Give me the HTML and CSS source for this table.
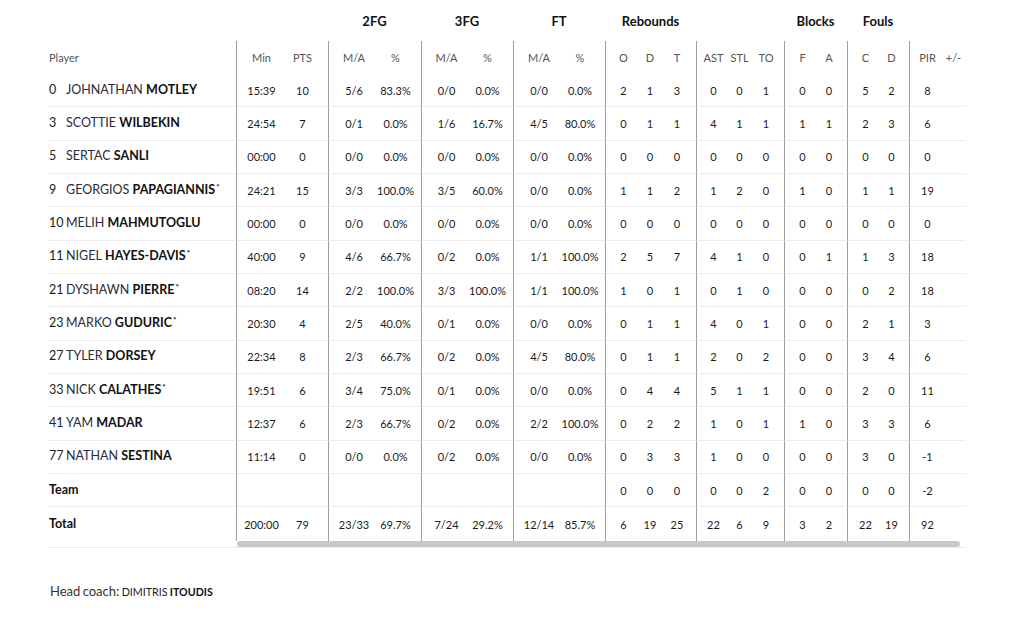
FILE: index.html
```html
<!DOCTYPE html>
<html lang="en">
<head>
<meta charset="utf-8">
<title>Box score</title>
<link rel="stylesheet" href="styles.css">
</head>
<body>
<div class="boxscore">
  <div class="board">
    <div class="players">
      <div class="top"></div>
      <div class="prow head">Player</div>
      <div class="prow"><span class="num">0</span><span class="fn">JOHNATHAN</span>&nbsp;<b>MOTLEY</b></div>
      <div class="prow"><span class="num">3</span><span class="fn">SCOTTIE</span>&nbsp;<b>WILBEKIN</b></div>
      <div class="prow"><span class="num">5</span><span class="fn">SERTAC</span>&nbsp;<b>SANLI</b></div>
      <div class="prow"><span class="num">9</span><span class="fn">GEORGIOS</span>&nbsp;<b>PAPAGIANNIS<sup>*</sup></b></div>
      <div class="prow"><span class="num">10</span><span class="fn">MELIH</span>&nbsp;<b>MAHMUTOGLU</b></div>
      <div class="prow"><span class="num">11</span><span class="fn">NIGEL</span>&nbsp;<b>HAYES-DAVIS<sup>*</sup></b></div>
      <div class="prow"><span class="num">21</span><span class="fn">DYSHAWN</span>&nbsp;<b>PIERRE<sup>*</sup></b></div>
      <div class="prow"><span class="num">23</span><span class="fn">MARKO</span>&nbsp;<b>GUDURIC<sup>*</sup></b></div>
      <div class="prow"><span class="num">27</span><span class="fn">TYLER</span>&nbsp;<b>DORSEY</b></div>
      <div class="prow"><span class="num">33</span><span class="fn">NICK</span>&nbsp;<b>CALATHES<sup>*</sup></b></div>
      <div class="prow"><span class="num">41</span><span class="fn">YAM</span>&nbsp;<b>MADAR</b></div>
      <div class="prow"><span class="num">77</span><span class="fn">NATHAN</span>&nbsp;<b>SESTINA</b></div>
      <div class="prow label">Team</div>
      <div class="prow label total">Total</div>
    </div>
    <div class="stats">
      <div class="groups">
        <span></span><span>2FG</span><span>3FG</span><span>FT</span><span>Rebounds</span><span></span><span>Blocks</span><span>Fouls</span><span></span>
      </div>
      <div class="srow head"><span>Min</span><span>PTS</span><span>M/A</span><span>%</span><span>M/A</span><span>%</span><span>M/A</span><span>%</span><span>O</span><span>D</span><span>T</span><span>AST</span><span>STL</span><span>TO</span><span>F</span><span>A</span><span>C</span><span>D</span><span>PIR</span><span>+/-</span></div>
      <div class="srow"><span>15:39</span><span>10</span><span>5/6</span><span>83.3%</span><span>0/0</span><span>0.0%</span><span>0/0</span><span>0.0%</span><span>2</span><span>1</span><span>3</span><span>0</span><span>0</span><span>1</span><span>0</span><span>0</span><span>5</span><span>2</span><span>8</span><span></span></div>
      <div class="srow"><span>24:54</span><span>7</span><span>0/1</span><span>0.0%</span><span>1/6</span><span>16.7%</span><span>4/5</span><span>80.0%</span><span>0</span><span>1</span><span>1</span><span>4</span><span>1</span><span>1</span><span>1</span><span>1</span><span>2</span><span>3</span><span>6</span><span></span></div>
      <div class="srow"><span>00:00</span><span>0</span><span>0/0</span><span>0.0%</span><span>0/0</span><span>0.0%</span><span>0/0</span><span>0.0%</span><span>0</span><span>0</span><span>0</span><span>0</span><span>0</span><span>0</span><span>0</span><span>0</span><span>0</span><span>0</span><span>0</span><span></span></div>
      <div class="srow"><span>24:21</span><span>15</span><span>3/3</span><span>100.0%</span><span>3/5</span><span>60.0%</span><span>0/0</span><span>0.0%</span><span>1</span><span>1</span><span>2</span><span>1</span><span>2</span><span>0</span><span>1</span><span>0</span><span>1</span><span>1</span><span>19</span><span></span></div>
      <div class="srow"><span>00:00</span><span>0</span><span>0/0</span><span>0.0%</span><span>0/0</span><span>0.0%</span><span>0/0</span><span>0.0%</span><span>0</span><span>0</span><span>0</span><span>0</span><span>0</span><span>0</span><span>0</span><span>0</span><span>0</span><span>0</span><span>0</span><span></span></div>
      <div class="srow"><span>40:00</span><span>9</span><span>4/6</span><span>66.7%</span><span>0/2</span><span>0.0%</span><span>1/1</span><span>100.0%</span><span>2</span><span>5</span><span>7</span><span>4</span><span>1</span><span>0</span><span>0</span><span>1</span><span>1</span><span>3</span><span>18</span><span></span></div>
      <div class="srow"><span>08:20</span><span>14</span><span>2/2</span><span>100.0%</span><span>3/3</span><span>100.0%</span><span>1/1</span><span>100.0%</span><span>1</span><span>0</span><span>1</span><span>0</span><span>1</span><span>0</span><span>0</span><span>0</span><span>0</span><span>2</span><span>18</span><span></span></div>
      <div class="srow"><span>20:30</span><span>4</span><span>2/5</span><span>40.0%</span><span>0/1</span><span>0.0%</span><span>0/0</span><span>0.0%</span><span>0</span><span>1</span><span>1</span><span>4</span><span>0</span><span>1</span><span>0</span><span>0</span><span>2</span><span>1</span><span>3</span><span></span></div>
      <div class="srow"><span>22:34</span><span>8</span><span>2/3</span><span>66.7%</span><span>0/2</span><span>0.0%</span><span>4/5</span><span>80.0%</span><span>0</span><span>1</span><span>1</span><span>2</span><span>0</span><span>2</span><span>0</span><span>0</span><span>3</span><span>4</span><span>6</span><span></span></div>
      <div class="srow"><span>19:51</span><span>6</span><span>3/4</span><span>75.0%</span><span>0/1</span><span>0.0%</span><span>0/0</span><span>0.0%</span><span>0</span><span>4</span><span>4</span><span>5</span><span>1</span><span>1</span><span>0</span><span>0</span><span>2</span><span>0</span><span>11</span><span></span></div>
      <div class="srow"><span>12:37</span><span>6</span><span>2/3</span><span>66.7%</span><span>0/2</span><span>0.0%</span><span>2/2</span><span>100.0%</span><span>0</span><span>2</span><span>2</span><span>1</span><span>0</span><span>1</span><span>1</span><span>0</span><span>3</span><span>3</span><span>6</span><span></span></div>
      <div class="srow"><span>11:14</span><span>0</span><span>0/0</span><span>0.0%</span><span>0/2</span><span>0.0%</span><span>0/0</span><span>0.0%</span><span>0</span><span>3</span><span>3</span><span>1</span><span>0</span><span>0</span><span>0</span><span>0</span><span>3</span><span>0</span><span>-1</span><span></span></div>
      <div class="srow"><span></span><span></span><span></span><span></span><span></span><span></span><span></span><span></span><span>0</span><span>0</span><span>0</span><span>0</span><span>0</span><span>2</span><span>0</span><span>0</span><span>0</span><span>0</span><span>-2</span><span></span></div>
      <div class="srow total"><span>200:00</span><span>79</span><span>23/33</span><span>69.7%</span><span>7/24</span><span>29.2%</span><span>12/14</span><span>85.7%</span><span>6</span><span>19</span><span>25</span><span>22</span><span>6</span><span>9</span><span>3</span><span>2</span><span>22</span><span>19</span><span>92</span><span></span></div>
      <div class="scrollbar"></div>
    </div>
  </div>
  <p class="coach">Head coach: <span class="fn">DIMITRIS</span> <b>ITOUDIS</b></p>
</div>
</body>
</html>
```
FILE: styles.css
```css
* { box-sizing: border-box; }

body {
  margin: 0;
  background: #fff;
  font-family: Lato, "Open Sans", sans-serif;
  color: #1d1d1d;
}

.boxscore {
  padding-left: 48px;
}

.board {
  display: flex;
  width: 918px;
  border-bottom: 1px solid #ececec;
}

/* left fixed column */
.players {
  width: 188px;
  padding-bottom: 6px;
}

.top { height: 41px; }

.prow {
  height: 33.333px;
  display: flex;
  align-items: center;
  padding-left: 1px;
  padding-bottom: 2px;
  border-bottom: 1px solid #ececec;
  font-size: 12.5px;
  color: #222;
  white-space: nowrap;
}

.prow.head {
  height: 33px;
  padding-bottom: 0;
  border-bottom: none;
  font-size: 11px;
  color: #555;
}

.num {
  display: inline-block;
  width: 17px;
}

.fn { color: #2b2b3a; }

.prow b {
  font-weight: 700;
  color: #111;
}

.prow sup {
  font-size: 8px;
  vertical-align: 0;
  position: relative;
  top: -4px;
  margin-left: 1px;
}

.prow.label {
  font-weight: 700;
  font-size: 12.5px;
  color: #111;
}

.prow.total {
  height: 33.667px;
  border-bottom: none;
}

/* scrollable stats */
.stats {
  width: 730px;
}

.groups {
  display: grid;
  grid-template-columns: 92px 93px 92px 92px 91px 88px 63px 62px 57px;
  height: 41px;
}

.groups span {
  display: flex;
  align-items: center;
  justify-content: center;
  font-size: 13px;
  font-weight: 700;
  color: #111;
}

.srow {
  display: grid;
  grid-template-columns: 46px 46px 47px 46px 46px 46px 47px 45px 32px 26px 33px 30px 27px 31px 32px 31px 32px 30px 32px 25px;
  height: 33.333px;
  font-size: 11px;
  color: #1a1a1a;
}

.srow span {
  display: flex;
  align-items: center;
  justify-content: center;
  border-bottom: 1px solid #ececec;
  white-space: nowrap;
}

.srow > :is(:nth-child(1), :nth-child(3), :nth-child(5), :nth-child(7), :nth-child(9), :nth-child(12), :nth-child(15), :nth-child(17), :nth-child(19)) {
  border-left: 1px solid #9e9e9e;
  padding-left: 4px;
}

.srow > :is(:nth-child(2), :nth-child(4), :nth-child(6), :nth-child(8), :nth-child(11), :nth-child(14), :nth-child(16), :nth-child(18)) {
  padding-right: 5px;
}

.srow.head {
  height: 33px;
  color: #555;
}

.srow.head span { border-bottom: none; }

.srow.total { height: 33.667px; }
.srow.total span { border-bottom: none; }

.scrollbar {
  height: 6px;
  width: 723px;
  margin-left: 1px;
  background: #c8c8c8;
  border-radius: 3px;
}

.coach {
  margin: 35px 0 0 2px;
  font-size: 13px;
  line-height: 16px;
  color: #333;
  word-spacing: -1px;
}

.coach .fn {
  font-size: 10.7px;
  color: #222;
}

.coach b {
  font-size: 10.7px;
  font-weight: 700;
  color: #111;
}
```
